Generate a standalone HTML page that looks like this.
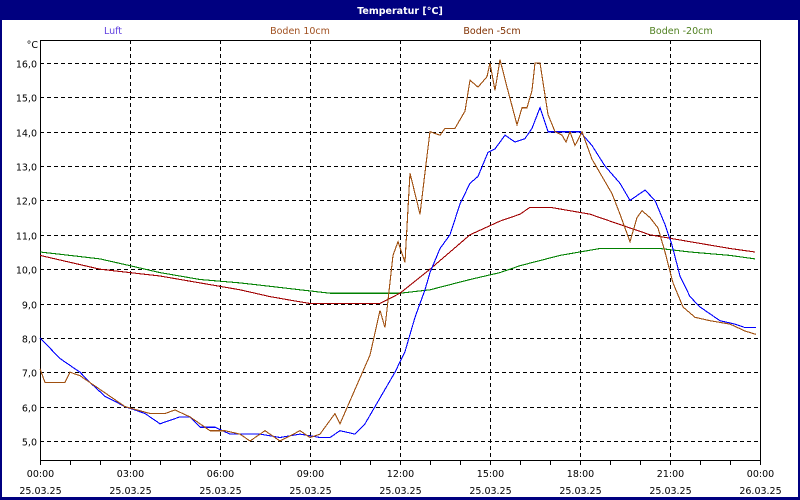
<!DOCTYPE html>
<html><head><meta charset="utf-8"><style>
html,body{margin:0;padding:0;width:800px;height:500px;overflow:hidden;background:#fff}
svg text{font-family:"DejaVu Sans","Liberation Sans",sans-serif;font-size:9.5px}
</style></head><body>
<svg id="s" width="800" height="500" xmlns="http://www.w3.org/2000/svg" shape-rendering="crispEdges">
<rect x="0" y="0" width="800" height="500" fill="#000080"/>
<rect x="2" y="20" width="796" height="477" fill="#fff"/>
<text x="400" y="14" fill="#fff" text-anchor="middle" font-weight="bold">Temperatur [°C]</text>
<text x="113" y="34" fill="#6040e0" text-anchor="middle">Luft</text>
<text x="300" y="34" fill="#a05020" text-anchor="middle">Boden 10cm</text>
<text x="492" y="34" fill="#803000" text-anchor="middle">Boden -5cm</text>
<text x="681" y="34" fill="#508020" text-anchor="middle">Boden -20cm</text>
<text x="38" y="48" text-anchor="end">°C</text>
<g id="grid"></g>
<rect x="40.5" y="40.5" width="720" height="420" fill="none" stroke="#000"/>
<g id="lines"></g>
</svg>
<script>
var ns="http://www.w3.org/2000/svg",g=document.getElementById('grid'),L=document.getElementById('lines');
function el(t,a,p){var e=document.createElementNS(ns,t);for(var k in a)e.setAttribute(k,a[k]);(p||g).appendChild(e);return e;}
function Y(v){return 63+(16-v)*34.36;}
for(var v=5;v<=16;v++){var y=Math.round(Y(v))+0.5;el('line',{x1:40,x2:760,y1:y,y2:y,stroke:'#000','stroke-dasharray':'4,3'});
var t=el('text',{x:37,y:y+4,'text-anchor':'end'});t.textContent=v+',0';}
for(var h=0;h<=24;h++){var x=40+h*30+0.5;el('line',{x1:x,x2:x,y1:460,y2:465,stroke:'#000'});
if(h%3==0){if(h>0&&h<24)el('line',{x1:x,x2:x,y1:40,y2:460,stroke:'#000','stroke-dasharray':'4,3'});
var t=el('text',{x:x,y:477,'text-anchor':'middle'});t.textContent=(h==24?'00':('0'+h).slice(-2))+':00';
t=el('text',{x:x,y:494,'text-anchor':'middle'});t.textContent=h==24?'26.03.25':'25.03.25';}}
function pl(pts,c){var s=[];for(var i=0;i<pts.length;i+=2)s.push(pts[i]+','+Y(pts[i+1]).toFixed(1));el('polyline',{points:s.join(' '),fill:'none',stroke:c,'stroke-width':1.1},L);}
pl([40,10.5,70,10.4,100,10.3,130,10.1,160,9.9,200,9.7,240,9.6,270,9.5,300,9.4,330,9.3,380,9.3,400,9.3,430,9.4,470,9.7,500,9.9,520,10.1,560,10.4,600,10.6,660,10.6,690,10.5,730,10.4,755,10.3],'#008000');
pl([40,10.4,70,10.2,100,10.0,130,9.9,160,9.8,200,9.6,240,9.4,270,9.2,290,9.1,310,9.0,380,9.0,400,9.3,430,10.0,470,11.0,500,11.4,520,11.6,530,11.8,550,11.8,570,11.7,590,11.6,610,11.4,650,11.0,690,10.8,730,10.6,755,10.5],'#a00000');
pl([40,8.0,50,7.7,60,7.4,70,7.2,80,7.0,90,6.7,105,6.3,125,6.0,145,5.8,160,5.5,170,5.6,180,5.7,190,5.7,200,5.4,215,5.4,230,5.2,260,5.2,280,5.1,300,5.2,320,5.1,330,5.1,340,5.3,355,5.2,365,5.5,375,6.0,385,6.5,395,7.0,405,7.6,415,8.6,425,9.4,430,9.9,440,10.6,450,11.0,460,11.9,470,12.5,478,12.7,488,13.4,495,13.5,505,13.9,515,13.7,525,13.8,532,14.1,540,14.7,548,14.0,560,14.0,580,14.0,592,13.6,605,13.0,620,12.5,630,12.0,645,12.3,655,12.0,665,11.3,672,10.7,680,9.8,690,9.2,700,8.9,720,8.5,735,8.4,745,8.3,756,8.3],'#0000ff');
pl([40,7.1,45,6.7,65,6.7,70,7.0,80,6.9,95,6.6,110,6.3,125,6.0,150,5.8,165,5.8,175,5.9,190,5.7,210,5.3,225,5.3,240,5.2,250,5.0,265,5.3,280,5.0,300,5.3,310,5.1,320,5.2,335,5.8,340,5.5,355,6.5,370,7.5,380,8.8,385,8.3,393,10.4,398,10.8,405,10.2,410,12.8,420,11.6,427,13.3,430,14.0,440,13.9,445,14.1,455,14.1,465,14.6,470,15.5,478,15.3,487,15.6,490,16.0,495,15.2,500,16.1,507,15.3,517,14.2,522,14.7,527,14.7,532,15.2,535,16.0,540,16.0,548,14.5,555,14.0,562,13.9,566,13.7,570,14.0,575,13.6,582,14.0,592,13.2,612,12.2,620,11.6,630,10.8,637,11.5,642,11.7,650,11.5,658,11.2,665,10.5,673,9.6,683,8.9,695,8.6,710,8.5,730,8.4,745,8.2,756,8.1],'#a05010');
</script>
</body></html>
